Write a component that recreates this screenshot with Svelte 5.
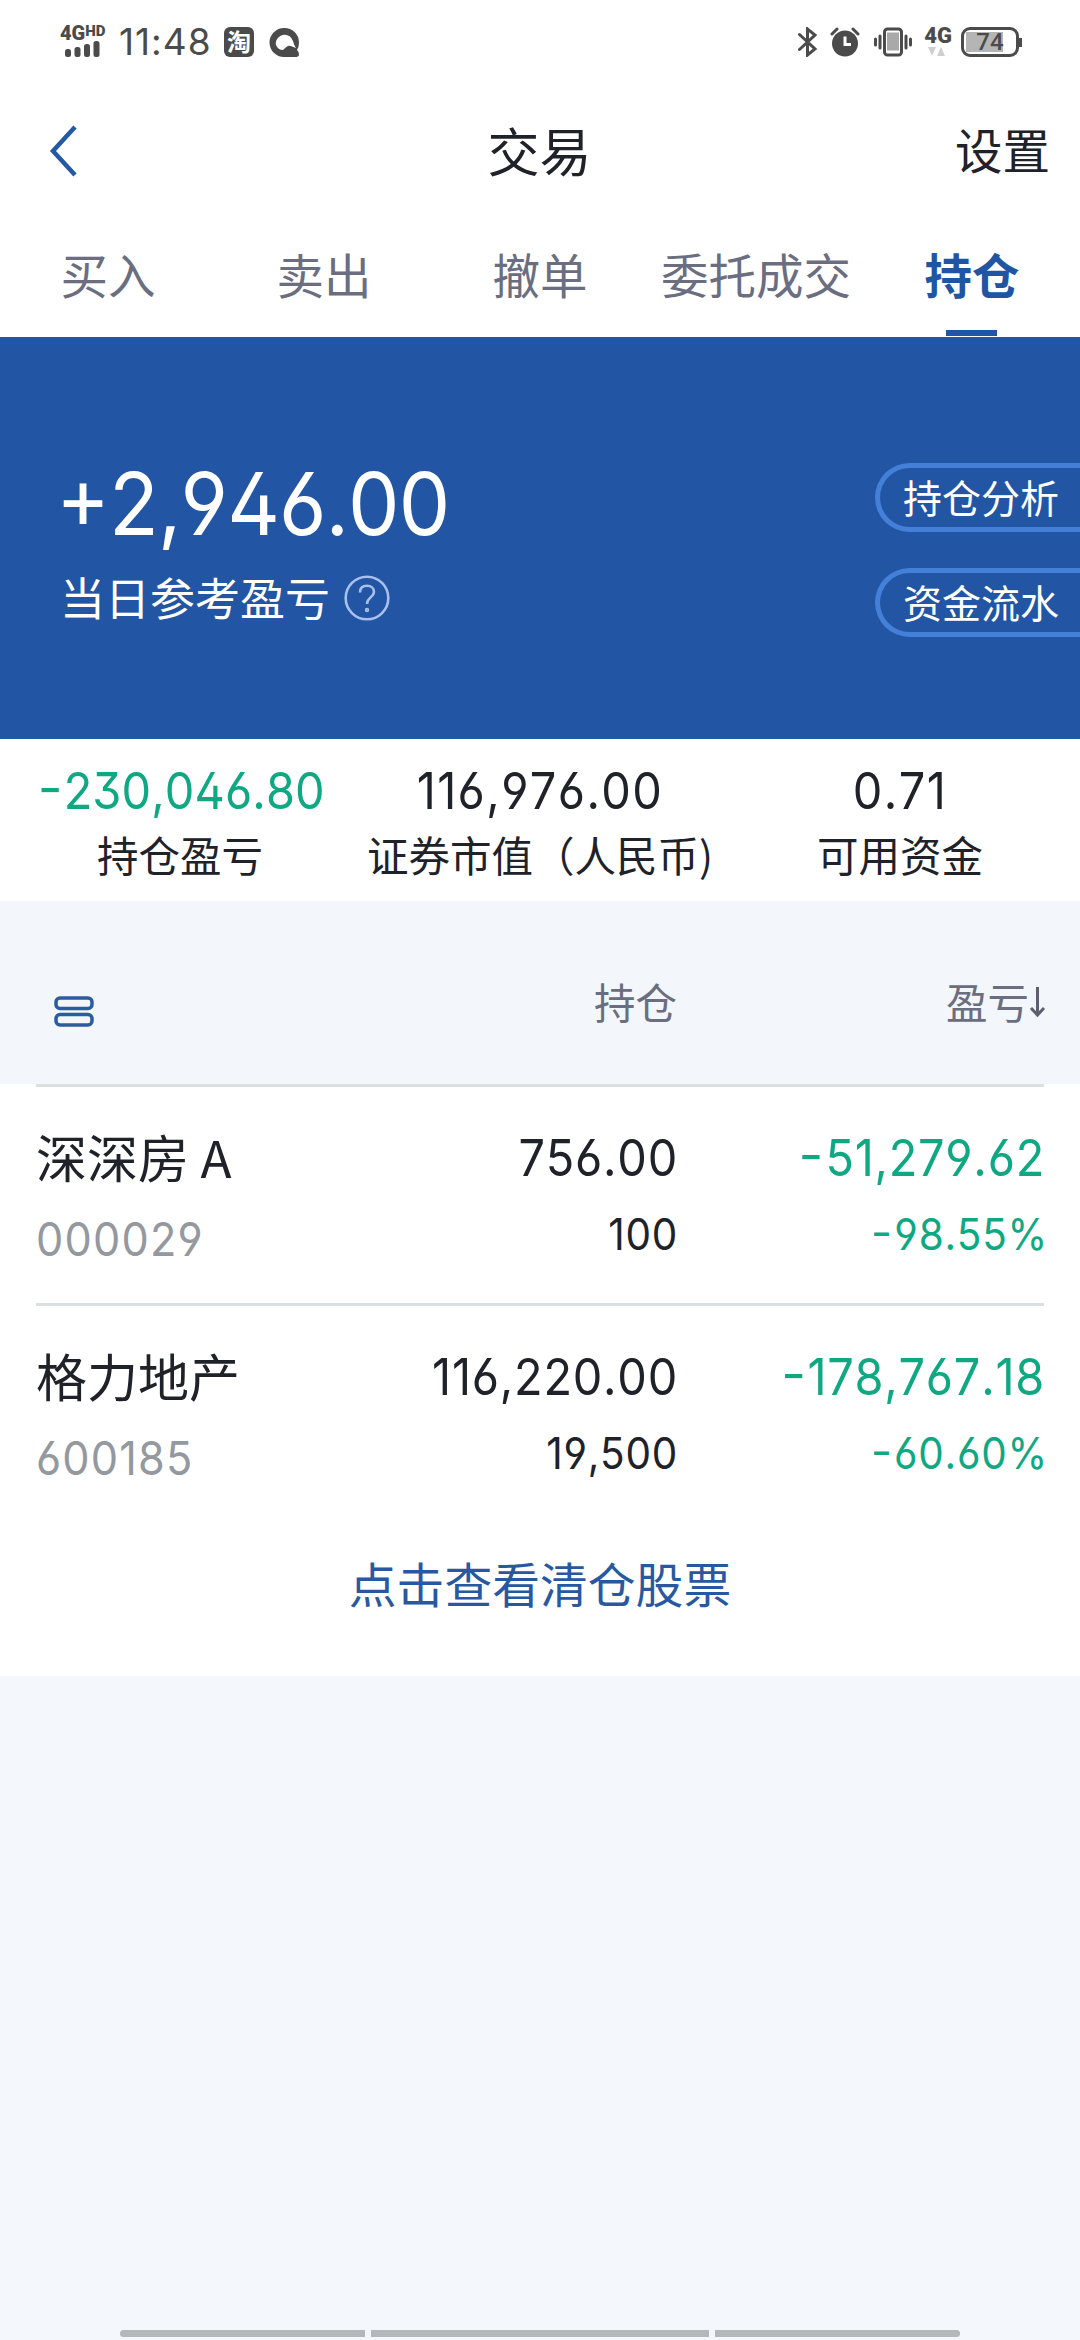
<script lang="ts">
    /*--------------------------------- Data ---------------------------------*/

    const tabs = ["买入", "卖出", "撤单", "委托成交", "持仓"];
    const active = "持仓";

    const actions = ["持仓分析", "资金流水"];

    const stats = [
        { value: "-230,046.80", label: "持仓盈亏" },
        { value: "116,976.00", label: "证券市值（人民币)" },
        { value: "0.71", label: "可用资金" },
    ];

    const holdings = [
        {
            name: "深深房 A",
            code: "000029",
            value: "756.00",
            amount: "100",
            profit: "-51,279.62",
            percent: "-98.55%",
        },
        {
            name: "格力地产",
            code: "600185",
            value: "116,220.00",
            amount: "19,500",
            profit: "-178,767.18",
            percent: "-60.60%",
        },
    ];
</script>

{#snippet figure(text: string, kind: string)}
    {#if text.startsWith("-")}
        <div class="num {kind} down"><span class="sign">-</span>{text.slice(1)}</div>
    {:else}
        <div class="num {kind}">{text}</div>
    {/if}
{/snippet}

<div class="screen">
    <div class="status">
        <div class="signal">
            <span class="net">4G<sup>HD</sup></span>
            <svg width="36" height="17" viewBox="0 0 36 17">
                <rect x="0" y="8" width="6" height="8" rx="2.5" />
                <rect x="9.5" y="6" width="6" height="10" rx="2.5" />
                <rect x="19" y="3" width="6" height="13" rx="2.5" />
                <rect x="28.5" y="0" width="6" height="16" rx="2.5" />
            </svg>
        </div>
        <span class="clock">11:48</span>
        <span class="app">淘</span>
        <svg class="browser" width="31" height="31" viewBox="0 0 31 31">
            <path
                fill-rule="evenodd"
                d="M15 1A14.5 14.5 0 0 1 30 15.500Q30 20 28 23Q30.500 25 30 28Q29.500 30 26 30H15A14.500 14.500 0 0 1 15 1ZM7 18C8 21 11 23 14 23C16 21 17 20 19 19Q21 18.300 23 19.500L27 21C25 18 25 17 24 14C22 9 18 7 14 8C9 9 6 14 7 18Z"
            />
        </svg>

        <div class="right">
            <svg width="20" height="30" viewBox="0 0 20 30" class="line">
                <path d="M1.500 7.500L17 22L9.500 28V2L17 8L1.500 22.500" />
            </svg>
            <svg width="30" height="30" viewBox="0 0 30 30">
                <circle cx="15" cy="16.500" r="13" />
                <path class="line" d="M2 7L7 2M23 2L28 7" />
                <path class="hands" d="M15 9.500V17.500H21" />
            </svg>
            <svg width="38" height="30" viewBox="0 0 38 30" class="vibrate">
                <rect x="10.500" y="2" width="17" height="26" rx="3" class="line" />
                <rect x="13" y="5.500" width="12" height="18" fill="#a9a9a9" />
                <path class="line" d="M6 9V21M1.500 12V18M32 9V21M36.500 12V18" />
            </svg>
            <div class="data">
                <span>4G</span>
                <svg width="18" height="9" viewBox="0 0 18 9">
                    <path fill="#cfcfcf" d="M0 0H8L4 9ZM9 9H17L13 0Z" />
                </svg>
            </div>
            <div class="battery">
                <span class="level">74</span>
            </div>
        </div>
    </div>

    <header>
        <svg width="30" height="54" viewBox="0 0 30 54" class="back">
            <path d="M26 3L4 27L26 51" />
        </svg>
        <h1>交易</h1>
        <span class="settings">设置</span>
    </header>

    <nav>
        {#each tabs as tab}
            <span class="tab" class:active={tab === active}>{tab}</span>
        {/each}
    </nav>

    <section class="hero">
        <div class="today">
            {@render figure("+2,946.00", "total")}
            <div class="caption">
                <span>当日参考盈亏</span>
                <svg width="46" height="46" viewBox="0 0 46 46" class="help">
                    <circle cx="23" cy="23" r="21.300" />
                    <path d="M16 17.500C16 13 19 10.800 23 10.800C27 10.800 30 13.300 30 17C30 22 23 22.500 23 29" />
                    <circle cx="23" cy="35" r="0.900" />
                </svg>
            </div>
        </div>
        <div class="actions">
            {#each actions as action}
                <span class="pill">{action}</span>
            {/each}
        </div>
    </section>

    <section class="stats">
        {#each stats as stat}
            <div class="stat">
                {@render figure(stat.value, "value")}
                <div class="label">{stat.label}</div>
            </div>
        {/each}
    </section>

    <div class="columns">
        <svg width="40" height="31" viewBox="0 0 40 31" class="menu">
            <rect x="2" y="2" width="36" height="10.500" rx="4" />
            <rect x="2" y="18.500" width="36" height="10.500" rx="4" />
        </svg>
        <span class="held">持仓</span>
        <span class="gain">
            盈亏
            <svg width="17" height="32" viewBox="0 0 17 32">
                <path d="M8.500 1V29M2 22L8.500 29L15 22" />
            </svg>
        </span>
    </div>

    <section class="list">
        {#each holdings as stock}
            <div class="row">
                <div class="cell first">
                    <div class="name">{stock.name}</div>
                    {@render figure(stock.code, "code")}
                </div>
                <div class="cell">
                    {@render figure(stock.value, "value")}
                    {@render figure(stock.amount, "sub")}
                </div>
                <div class="cell">
                    {@render figure(stock.profit, "value")}
                    {@render figure(stock.percent, "sub")}
                </div>
            </div>
        {/each}
        <div class="more">点击查看清仓股票</div>
    </section>

    <div class="gesture">
        <i></i><i></i><i></i>
    </div>
</div>

<style>
    :global(body) {
        background: #f4f7fc;
    }

    .screen {
        display: flex;
        flex-direction: column;
        width: 1080px;
        height: 2340px;
        overflow: hidden;
        color: #20222a;
        font-family: "Noto Sans CJK SC", sans-serif;
        background: #f4f7fc;
    }

    svg {
        display: block;
        flex: none;
    }

    /* Narrow figures with open six and nine */
    .num {
        font-family: Inter, "Noto Sans CJK SC", sans-serif;
        font-feature-settings: "ss01", "case", "calt" 0;
        font-kerning: none;
        letter-spacing: 0.8px;
        white-space: nowrap;
        transform: scaleX(0.92);
    }

    .sign {
        display: inline-block;
        margin-right: 3px;
        transform: scaleX(1.15);
    }

    .down {
        color: #0fa883;
    }

    /*------------------------------ Status bar ------------------------------*/

    .status {
        display: flex;
        flex: none;
        align-items: center;
        height: 84px;
        padding: 0 61px 0 60px;
        box-sizing: border-box;
        background: #fff;
        color: #4b4b4b;
        fill: #4b4b4b;
    }

    .signal {
        display: flex;
        flex-direction: column;
        width: 59px;
        height: 32px;
    }

    .signal svg {
        margin-left: 5px;
    }

    .net {
        height: 16px;
        font: 900 20px/14px Roboto, sans-serif;
        white-space: nowrap;
    }

    .net sup {
        font-size: 15px;
        line-height: 0;
        vertical-align: 4px;
    }

    .clock {
        width: 105px;
        font: 37px/40px Inter, sans-serif;
        letter-spacing: 1px;
    }

    .app {
        width: 30px;
        height: 30px;
        border-radius: 6px;
        background: #4b4b4b;
        color: #fff;
        font-size: 24px;
        font-weight: 700;
        line-height: 28px;
        text-align: center;
    }

    .browser {
        margin-left: 15px;
    }

    .right {
        display: flex;
        align-items: center;
        margin-left: auto;
    }

    .line {
        fill: none;
        stroke: #4b4b4b;
        stroke-width: 3;
        stroke-linecap: round;
    }

    .hands {
        fill: none;
        stroke: #fff;
        stroke-width: 3;
    }

    .right > * {
        margin-left: 12px;
    }

    .right .vibrate {
        margin-left: 14px;
    }

    .data {
        height: 30px;
        font: 900 22px/18px Roboto, sans-serif;
    }

    .data svg {
        margin: 2px 0 0 4px;
    }

    .battery {
        position: relative;
        width: 58px;
        height: 30px;
        padding: 3px;
        box-sizing: border-box;
        border: 3px solid #4b4b4b;
        border-radius: 9px;
        background: linear-gradient(#b5b5b5, #b5b5b5) 2px 2px / 37px 20px no-repeat;
    }

    .right .battery {
        margin-left: 9px;
    }

    .battery::after {
        content: "";
        position: absolute;
        top: 8px;
        right: -6px;
        width: 3px;
        height: 9px;
        background: #4b4b4b;
    }

    .level {
        display: block;
        font: 500 24px/19px Roboto, sans-serif;
        text-align: center;
    }

    /*---------------------------- Header and tabs ---------------------------*/

    header {
        display: grid;
        grid-template-columns: 1fr auto 1fr;
        flex: none;
        align-items: center;
        height: 134px;
        padding: 0 30px 0 49px;
        box-sizing: border-box;
        background: #fff;
    }

    .back {
        fill: none;
        stroke: #2459a4;
        stroke-width: 4.500;
    }

    h1 {
        margin: 0 20px 4px 0;
        font-size: 52px;
        font-weight: 400;
    }

    .settings {
        justify-self: end;
        margin-bottom: 6px;
        font-size: 47.500px;
    }

    nav {
        display: grid;
        grid-template-columns: repeat(5, 216px);
        flex: none;
        height: 119px;
        background: #fff;
    }

    .tab {
        position: relative;
        font-size: 47.500px;
        line-height: 111px;
        text-align: center;
        color: #6a6e80;
    }

    .tab.active {
        color: #2055a4;
        font-weight: 700;
    }

    .tab.active::after {
        content: "";
        position: absolute;
        bottom: 1px;
        left: 82px;
        width: 51px;
        height: 6px;
        background: #2055a4;
    }

    /*--------------------------------- Hero ---------------------------------*/

    .hero {
        display: flex;
        flex: none;
        justify-content: space-between;
        height: 402px;
        background: #2255a4;
        color: #fff;
    }

    .today {
        padding: 117px 0 0 60px;
    }

    .total {
        margin-left: -4px;
        font-size: 86px;
        letter-spacing: -1px;
        line-height: 100px;
        transform: scaleX(0.95);
        transform-origin: left;
    }

    .caption {
        display: flex;
        align-items: center;
        gap: 14px;
        height: 60px;
        margin-top: 14px;
        font-size: 45px;
    }

    .caption span {
        margin-bottom: 4px;
    }

    .help {
        fill: none;
        stroke: #a9c0ee;
        stroke-width: 2.600;
    }

    .actions {
        display: flex;
        flex-direction: column;
        gap: 36px;
        padding-top: 126px;
    }

    .pill {
        width: 205px;
        height: 69px;
        padding-left: 23px;
        box-sizing: border-box;
        border: 5px solid #4480d8;
        border-right: 0;
        border-radius: 35px 0 0 35px;
        font-size: 39px;
        line-height: 56px;
        white-space: nowrap;
    }

    /*--------------------------------- Stats --------------------------------*/

    .stats {
        display: grid;
        grid-template-columns: repeat(3, 360px);
        flex: none;
        height: 162px;
        padding-top: 22px;
        box-sizing: border-box;
        background: #fff;
        text-align: center;
    }

    .value {
        font-size: 51px;
        line-height: 60px;
    }

    .stat .value {
        letter-spacing: 1.5px;
    }

    .stat .value.down {
        margin-left: 4px;
        letter-spacing: 0.1px;
    }

    .label {
        margin-top: 3px;
        font-size: 41.500px;
        line-height: 60px;
        white-space: nowrap;
    }

    /*------------------------------- Holdings -------------------------------*/

    .columns {
        display: grid;
        grid-template-columns: 321px 320px 1fr;
        flex: none;
        height: 183px;
        padding: 0 34px 0 36px;
        color: #6a6e80;
        font-size: 41.500px;
        line-height: 200px;
        background: #f3f6fa;
    }

    .menu {
        margin: 95px 0 0 18px;
        fill: none;
        stroke: #2c5c9f;
        stroke-width: 3.500;
    }

    .held {
        text-align: right;
    }

    .gain {
        display: flex;
        justify-content: flex-end;
    }

    .gain svg {
        margin-top: 85px;
        fill: none;
        stroke: #5c6070;
        stroke-width: 3;
    }

    .list {
        flex: none;
        height: 592px;
        padding: 0 36px;
        background: #fff;
    }

    .row {
        display: grid;
        grid-template-columns: 321px 320px 1fr;
        height: 216px;
        border-top: 3px solid #dcdfe1;
    }

    .cell {
        padding-top: 41px;
        text-align: right;
    }

    .cell .num {
        margin-right: -1px;
        transform-origin: right;
    }

    .cell.first {
        padding-top: 37px;
        text-align: left;
    }

    .name {
        font-size: 51px;
        line-height: 64px;
    }

    .cell .code {
        margin-top: 21px;
        color: #94989f;
        font-size: 47px;
        letter-spacing: 1.3px;
        line-height: 60px;
        transform-origin: left;
    }

    .sub {
        margin-top: 16px;
        font-size: 44px;
        line-height: 60px;
    }

    .cell .sub.down {
        margin-right: -4px;
    }

    .more {
        color: #2859a0;
        font-size: 47.800px;
        line-height: 121px;
        text-align: center;
    }

    .gesture {
        display: flex;
        gap: 6px;
        width: 840px;
        margin: auto auto 3px;
    }

    .gesture i {
        flex: 245;
        height: 7px;
        background: #b3b8bb;
    }

    .gesture i:nth-child(2) {
        flex: 338;
    }

    .gesture i:first-child {
        border-radius: 4px 0 0 4px;
    }

    .gesture i:last-child {
        border-radius: 0 4px 4px 0;
    }
</style>
